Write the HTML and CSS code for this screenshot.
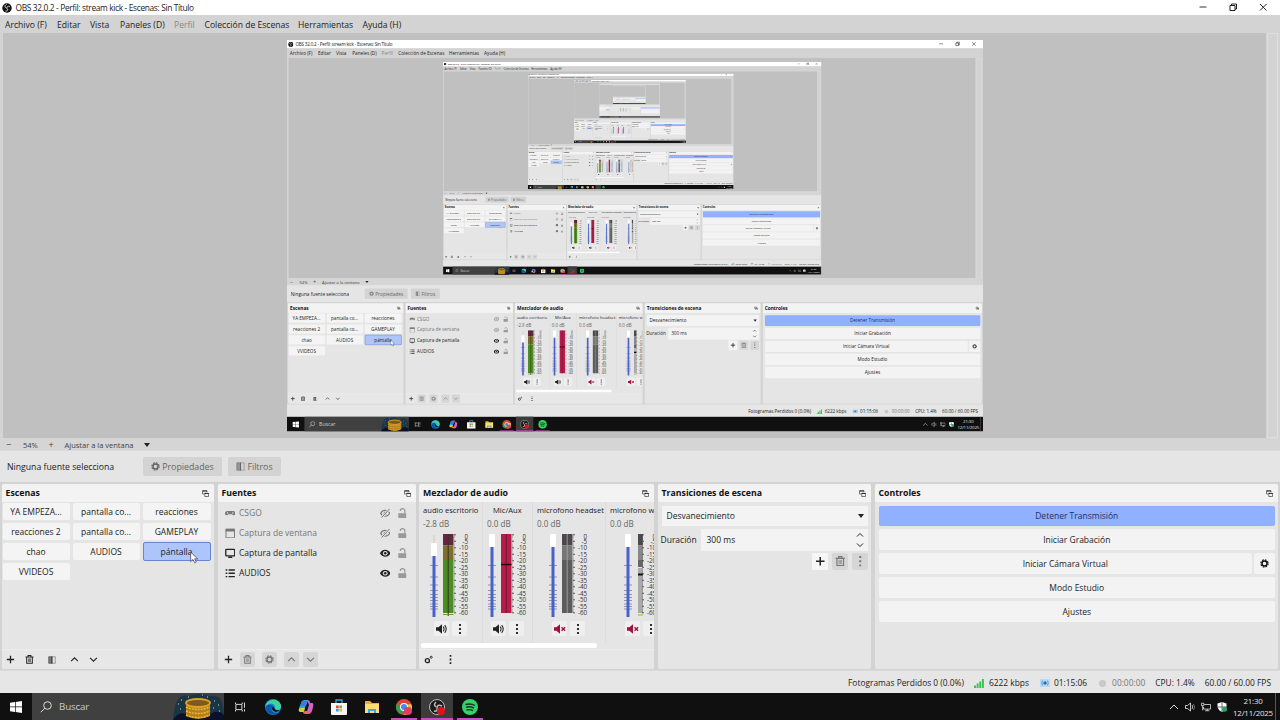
FILE: index.html
```html
<!DOCTYPE html>
<html lang="es">
<head>
    <meta charset="UTF-8">
    <meta name="viewport" content="width=device-width, initial-scale=1.0">
    <title>OBS 32.0.2 - Perfil: stream kick - Escenas: Sin Título</title>
    <link rel="stylesheet" href="styles.css">
</head>
<body>
    <svg class="sprite" width="0" height="0">
        <symbol id="obs" viewBox="0 0 20 20">
            <circle cx="10" cy="10" r="9.5" fill="#111"/>
            <path d="M9 3c-4 2-4 6 0 7M16 8c-3-3-7-1-6 3M7 16c4 1 6-3 3-5" fill="none" stroke="#ddd" stroke-width="2"/>
        </symbol>
        <symbol id="popout" viewBox="0 0 14 14">
            <path d="M4 8H1V1.500h9V4M5.500 6.500H13V13H5.500z" fill="none" stroke="#444" stroke-width="1.400"/>
            <path d="M1 2h9M5 7h8.500" stroke="#333" stroke-width="2.200"/>
        </symbol>
        <symbol id="plus" viewBox="0 0 16 16"><path d="M8 1.5v13M1.5 8h13" stroke="currentColor" stroke-width="2.3"/></symbol>
        <symbol id="trash" viewBox="0 0 16 16">
            <path d="M1 3.5h14M5.5 3V1h5v2M3 4v10.5h10V4" fill="none" stroke="currentColor" stroke-width="1.8"/>
            <path d="M6.2 6v6.500M8 6v6.500M9.800 6v6.500" stroke="currentColor" stroke-width="1"/>
        </symbol>
        <symbol id="filter" viewBox="0 0 16 16">
            <path d="M1.500 1.500h13v13h-13z" fill="none" stroke="currentColor" stroke-opacity=".5" stroke-width="1.500"/>
            <path d="M1 1h7v14H1z" fill="currentColor" fill-opacity=".55"/><path d="M7 1h2v14H7z" fill="currentColor"/>
        </symbol>
        <symbol id="up" viewBox="0 0 16 16"><path d="M2 11l6-6 6 6" fill="none" stroke="currentColor" stroke-width="2"/></symbol>
        <symbol id="down" viewBox="0 0 16 16"><path d="M2 5l6 6 6-6" fill="none" stroke="currentColor" stroke-width="2"/></symbol>
        <symbol id="gear" viewBox="0 0 16 16">
            <circle cx="8" cy="8" r="4.500" fill="none" stroke="currentColor" stroke-width="2.600"/>
            <circle cx="8" cy="8" r="6.500" fill="none" stroke="currentColor" stroke-width="2" stroke-dasharray="3 2.100"/>
        </symbol>
        <symbol id="gears" viewBox="0 0 16 16">
            <circle cx="6" cy="10" r="3.600" fill="none" stroke="currentColor" stroke-width="2.400"/>
            <circle cx="12.800" cy="4" r="1.800" fill="none" stroke="currentColor" stroke-width="1.600"/>
        </symbol>
        <symbol id="dots" viewBox="0 0 16 16"><path d="M6.500 0h3v3.200h-3zM6.500 6.400h3v3.200h-3zM6.500 12.800h3V16h-3z" fill="currentColor"/></symbol>
        <symbol id="gamepad" viewBox="0 0 16 16">
            <path d="M4 4.500h8c3 0 4 2 4 4s-2 3.500-4 2.200L10.500 9.500h-5L4 10.700C2 12 0 10.500 0 8.500s1-4 4-4z" fill="currentColor"/>
            <circle cx="4" cy="7.500" r="1.200" fill="#e5e5e5"/><circle cx="12" cy="7.500" r="1.200" fill="#e5e5e5"/>
        </symbol>
        <symbol id="window" viewBox="0 0 16 16"><path d="M1.500 2h13v13h-13z" fill="none" stroke="currentColor" stroke-width="1.500"/><path d="M1 1h14v4.500H1z" fill="currentColor"/></symbol>
        <symbol id="monitor" viewBox="0 0 16 16"><rect x="1.200" y="2.200" width="13.600" height="9.800" rx="1" fill="none" stroke="currentColor" stroke-width="2"/><path d="M5 14h6" stroke="currentColor" stroke-width="2.200"/></symbol>
        <symbol id="list" viewBox="0 0 16 16"><path d="M1 3h2.500M1 8h2.500M1 13h2.500M5.500 3H15M5.500 8H15M5.500 13H15" stroke="currentColor" stroke-width="2"/></symbol>
        <symbol id="eye" viewBox="0 0 16 16"><path d="M0 8c3-7 13-7 16 0-3 7-13 7-16 0z" fill="currentColor"/><circle cx="8" cy="8" r="3.600" fill="#e9e9e9"/><circle cx="8" cy="8" r="1.900" fill="currentColor"/></symbol>
        <symbol id="eye-off" viewBox="0 0 16 16"><path d="M1 8c3-6 11-6 14 0-3 6-11 6-14 0z" fill="none" stroke="currentColor" stroke-width="1.700"/><circle cx="8" cy="8" r="2.500" fill="currentColor"/><path d="M2 15L15 1" stroke="#e5e5e5" stroke-width="3.500"/><path d="M2.500 14.500L14.500 1.500" stroke="currentColor" stroke-width="1.500"/></symbol>
        <symbol id="lock" viewBox="0 0 16 16"><path d="M2 8h12v8H2z" fill="currentColor"/><path d="M5 4.500C5 0 12 0 12 4.500V8" fill="none" stroke="currentColor" stroke-width="1.900"/></symbol>
        <symbol id="speaker" viewBox="0 0 20 16"><path d="M0 5h4l6-5v16l-6-5H0z" fill="currentColor"/><path d="M12 4q3 4 0 8M14.500 1.500q5 6.500 0 13" fill="none" stroke="currentColor" stroke-width="1.700"/></symbol>
        <symbol id="muted" viewBox="0 0 20 16"><path d="M0 5h4l6-5v16l-6-5H0z" fill="#a01040"/><path d="M12.500 5l6 6M18.500 5l-6 6" stroke="#a01040" stroke-width="2.200"/></symbol>
        <!-- fader: handle is drawn per channel -->
        <symbol id="fader" viewBox="0 0 12 84">
            <path d="M2 31.500h8M2 43h8M2 51h8M2 56.500h8M2 60.500h8M2 63.500h8M2 66.500h8M2 70h8M2 72.500h8M2 75h8" stroke="#7480b0" stroke-width=".8"/>
        </symbol>
        <!-- dB scale next to the meters -->
        <symbol id="scale" viewBox="0 0 20 84">
            <path d="M0 .8h2M0 7.300h2M0 13.800h2M0 20.300h2M0 26.800h2M0 33.300h2M0 39.800h2M0 46.300h2M0 52.800h2M0 59.300h2M0 65.800h2M0 72.300h2M0 78.800h2" stroke="#333" stroke-width=".8"/>
            <path d="M.5 .8v78" stroke="#777" stroke-width=".8" stroke-dasharray=".5 .8"/>
            <g class="scale-text">
                <text x="14" y="5">0</text><text x="14" y="9.600">-5</text><text x="14" y="16">-10</text><text x="14" y="22.600">-15</text><text x="14" y="29">-20</text><text x="14" y="35.500">-25</text><text x="14" y="42">-30</text><text x="14" y="48.500">-35</text><text x="14" y="55">-40</text><text x="14" y="61.500">-45</text><text x="14" y="68">-50</text><text x="14" y="74.500">-55</text><text x="14" y="81">-60</text>
            </g>
        </symbol>
    </svg>

    <div class="desktop">
        <div class="titlebar">
            <svg class="logo"><use href="#obs"/></svg>
            <span class="title">OBS 32.0.2 - Perfil: stream kick - Escenas: Sin Título</span>
            <div class="window-buttons">
                <svg viewBox="0 0 10 10"><path d="M1.500 5h7" stroke="#333"/></svg>
                <svg viewBox="0 0 10 10"><path d="M2 3.500h5v5H2zM3.500 3.500V2h5v5H7" fill="none" stroke="#222"/></svg>
                <svg viewBox="0 0 10 10"><path d="M2 2l6.500 6.500M8.500 2L2 8.500" stroke="#222"/></svg>
            </div>
        </div>
        <div class="menubar">
            <span style="width: 52px">Archivo (F)</span><span style="width: 33px">Editar</span><span style="width: 30px">Vista</span><span style="width: 54px">Paneles (D)</span><span class="disabled" style="width: 30.5px">Perfil</span><span style="width: 93.5px">Colección de Escenas</span><span style="width: 64.5px">Herramientas</span><span>Ayuda (H)</span>
        </div>
        <div class="preview">
            <div class="canvas"><div class="capture"></div></div>
            <div class="vscroll"></div>
        </div>
        <div class="zoombar">
            <span class="zoom-out">−</span><span class="zoom-value">54%</span><span class="zoom-in">+</span><span class="zoom-mode">Ajustar a la ventana</span><i class="caret"></i>
        </div>
        <div class="contextbar">
            <span class="no-source">Ninguna fuente seleccionada</span>
            <span class="context-button properties"><svg><use href="#gear"/></svg>Propiedades</span>
            <span class="context-button filters"><svg><use href="#filter"/></svg>Filtros</span>
        </div>

        <div class="docks">
            <section class="dock">
                <h2>Escenas<svg><use href="#popout"/></svg></h2>
                <div class="scenes">
                    <span>YA EMPEZA...</span><span>pantalla co...</span><span>reacciones</span>
                    <span>reacciones 2</span><span>pantalla co...</span><span>GAMEPLAY</span>
                    <span>chao</span><span>AUDIOS</span><span class="selected">pántalla<svg class="cursor" viewBox="0 0 12 18"><path d="M1 1v14l3.500-3 2.500 5 2.500-1.200L7 11h4.500z" fill="#fff" stroke="#333"/></svg></span>
                    <span>VVIDEOS</span>
                </div>
                <div class="toolbar scene-tools">
                    <svg><use href="#plus"/></svg><svg><use href="#trash"/></svg><svg><use href="#filter"/></svg><svg><use href="#up"/></svg><svg><use href="#down"/></svg>
                </div>
            </section>

            <section class="dock">
                <h2>Fuentes<svg><use href="#popout"/></svg></h2>
                <div class="sources">
                    <div class="source hidden"><svg><use href="#gamepad"/></svg><span>CSGO</span><svg class="eye"><use href="#eye-off"/></svg><svg class="lock"><use href="#lock"/></svg></div>
                    <div class="source hidden"><svg><use href="#window"/></svg><span>Captura de ventana</span><svg class="eye"><use href="#eye-off"/></svg><svg class="lock"><use href="#lock"/></svg></div>
                    <div class="source"><svg><use href="#monitor"/></svg><span>Captura de pantalla</span><svg class="eye"><use href="#eye"/></svg><svg class="lock"><use href="#lock"/></svg></div>
                    <div class="source"><svg><use href="#list"/></svg><span>AUDIOS</span><svg class="eye"><use href="#eye"/></svg><svg class="lock"><use href="#lock"/></svg></div>
                </div>
                <div class="toolbar source-tools">
                    <b><svg><use href="#plus"/></svg></b><b class="off"><svg><use href="#trash"/></svg></b><b class="off"><svg><use href="#gear"/></svg></b><b class="off"><svg><use href="#up"/></svg></b><b class="off"><svg><use href="#down"/></svg></b>
                </div>
            </section>

            <section class="dock">
                <h2>Mezclador de audio<svg><use href="#popout"/></svg></h2>
                <div class="mixer">
                    <div class="channel desk">
                        <span class="name">audio escritorio</span><span class="level">-2.8 dB</span>
                        <div class="meters">
                            <svg class="fader" viewBox="0 0 12 84"><path d="M6 1v12" stroke="#ccc"/><use href="#fader" width="12" height="84"/><path d="M6 22v61" stroke="#4a62c8" stroke-width="3"/><rect x="3" y="9" width="6" height="13" rx="1" fill="#fff"/></svg>
                            <svg class="bars" viewBox="0 0 11 84"><path d="M0 0h10.500v11.500H0z" fill="#682443"/><path d="M0 11.500h10.500V26H0z" fill="#806e2b"/><path d="M0 26h10.500v53H0z" fill="#4b8e22"/><path d="M0 80.500h4.500M6 80.500h4.500" stroke="#56a82a"/><path d="M5.200 0v82" stroke="#33331f" stroke-width="1"/></svg>
                            <svg class="scale"><use href="#scale"/></svg>
                        </div>
                        <div class="channel-tools"><b><svg><use href="#speaker"/></svg></b><b><svg><use href="#dots"/></svg></b></div>
                    </div>
                    <div class="channel mic">
                        <span class="name">Mic/Aux</span><span class="level">0.0 dB</span>
                        <div class="meters">
                            <svg class="fader" viewBox="0 0 12 84"><use href="#fader" width="12" height="84"/><path d="M6 13v70" stroke="#4a62c8" stroke-width="3"/><rect x="3" y="0" width="6" height="13" rx="1" fill="#fff"/></svg>
                            <svg class="bars" viewBox="0 0 11 84"><path d="M0 0h10.500v79H0z" fill="#b81c4d"/><path d="M5.200 0v79" stroke="#6b1631" stroke-width="1"/><path d="M0 30.500h10.500" stroke="#300" stroke-width="1.500"/></svg>
                            <svg class="scale"><use href="#scale"/></svg>
                        </div>
                        <div class="channel-tools"><b><svg><use href="#speaker"/></svg></b><b><svg><use href="#dots"/></svg></b></div>
                    </div>
                    <div class="channel headset">
                        <span class="name">microfono headset</span><span class="level">0.0 dB</span>
                        <div class="meters">
                            <svg class="fader" viewBox="0 0 12 84"><use href="#fader" width="12" height="84"/><path d="M6 13v70" stroke="#4a62c8" stroke-width="3"/><rect x="3" y="0" width="6" height="13" rx="1" fill="#fff"/></svg>
                            <svg class="bars" viewBox="0 0 11 84"><path d="M0 0h10.500v11.500H0z" fill="#4d484b"/><path d="M0 11.500h10.500V26H0z" fill="#777"/><path d="M0 26h10.500v53H0z" fill="#5c5c5c"/><path d="M5.200 0v79" stroke="#aaa" stroke-width=".8"/></svg>
                            <svg class="scale"><use href="#scale"/></svg>
                        </div>
                        <div class="channel-tools"><b><svg><use href="#muted"/></svg></b><b><svg><use href="#dots"/></svg></b></div>
                    </div>
                    <div class="channel webcam">
                        <span class="name">microfono webcam</span><span class="level">0.0 dB</span>
                        <div class="meters">
                            <svg class="fader" viewBox="0 0 12 84"><use href="#fader" width="12" height="84"/><path d="M6 13v70" stroke="#4a62c8" stroke-width="3"/><rect x="3" y="0" width="6" height="13" rx="1" fill="#fff"/></svg>
                            <svg class="bars" viewBox="0 0 5 84"><path d="M0 0h5v11.500H0z" fill="#4d484b"/><path d="M0 11.500h5V26H0z" fill="#888"/><path d="M0 26h5v7H0z" fill="#666"/><path d="M0 34h5v45H0z" fill="#aaa"/><path d="M0 40.500h5" stroke="#111" stroke-width="2"/><path d="M0 81h5" stroke="#b9c832" stroke-width="1.500"/></svg>
                            <svg class="scale"><use href="#scale"/></svg>
                        </div>
                        <div class="channel-tools"><b><svg><use href="#muted"/></svg></b><b><svg><use href="#dots"/></svg></b></div>
                    </div>
                </div>
                <div class="hscroll"></div>
                <div class="toolbar mixer-tools"><svg><use href="#gears"/></svg><svg><use href="#dots"/></svg></div>
            </section>

            <section class="dock">
                <h2>Transiciones de escena<svg><use href="#popout"/></svg></h2>
                <div class="transitions">
                    <div class="select">Desvanecimiento<i class="caret"></i></div>
                    <div class="duration"><span>Duración</span><div class="spin">300 ms<div class="arrows"><svg><use href="#up"/></svg><svg><use href="#down"/></svg></div></div></div>
                    <div class="transition-tools"><b><svg><use href="#plus"/></svg></b><b class="off"><svg><use href="#trash"/></svg></b><b class="off"><svg><use href="#dots"/></svg></b></div>
                </div>
            </section>

            <section class="dock">
                <h2>Controles<svg><use href="#popout"/></svg></h2>
                <div class="controls">
                    <div class="control active">Detener Transmisión</div>
                    <div class="control">Iniciar Grabación</div>
                    <div class="control-row"><div class="control">Iniciar Cámara Virtual</div><div class="control config"><svg><use href="#gear"/></svg></div></div>
                    <div class="control">Modo Estudio</div>
                    <div class="control">Ajustes</div>
                </div>
            </section>
        </div>

        <div class="statusbar">
            <span class="dropped">Fotogramas Perdidos 0 (0.0%)</span>
            <svg class="signal" viewBox="0 0 10 9"><path d="M1 9V6.500M3.600 9V4.500M6.200 9V2.500M8.900 9V0" stroke="#35c24a" stroke-width="1.900"/></svg>
            <span class="bitrate">6222 kbps</span>
            <svg class="live" viewBox="0 0 10 8"><path d="M0 0h10v8H0z" fill="#b9daf3"/><circle cx="5" cy="4" r="1.700" fill="#256fb5"/><path d="M2.500 1.500q-1.500 2.500 0 5M7.500 1.500q1.500 2.500 0 5" fill="none" stroke="#5b9cd3"/></svg>
            <span class="stream-time">01:15:06</span>
            <svg class="rec" viewBox="0 0 10 10"><circle cx="5" cy="5" r="4" fill="#c9c9c9"/></svg>
            <span class="rec-time">00:00:00</span>
            <span class="cpu">CPU: 1.4%</span>
            <span>60.00 / 60.00 FPS</span>
        </div>

        <div class="taskbar">
            <div class="start"><svg viewBox="0 0 12 12"><path d="M0 1.700L5 1v4.600H0zM5.700.9L12 0v5.600H5.700zM0 6.300h5V11l-5-.7zM5.700 6.300H12V12l-6.300-.9z" fill="#fff"/></svg></div>
            <div class="search">
                <svg class="lens" viewBox="0 0 12 12"><circle cx="7.500" cy="4.500" r="3.800" fill="none" stroke="#ddd"/><path d="M4.800 7.200L.8 11.200" stroke="#ddd"/></svg>
                <span>Buscar</span>
                <svg class="highlight" viewBox="0 0 51 26">
                    <path d="M0 26Q1 10 6 4q4-4 10-2 10-4 20 0 9-1 12 4 3 6 3 20z" fill="#1c3544"/>
                    <path d="M0 26q5-9 13-6l22 2q9-8 16-1v5z" fill="#0b1128"/>
                    <path d="M13 8v14q12 6 24 0V8z" fill="#b97f16"/>
                    <ellipse cx="25" cy="9" rx="12" ry="4" fill="#7d5a18" stroke="#dba22c" stroke-width="1.800"/>
                    <path d="M13 13q12 5 24 0M13 17q12 5 24 0M13 21q12 5 24 0" fill="none" stroke="#e8bd48" stroke-width="1.400" stroke-dasharray="2 1"/>
                    <path d="M5 10h1M8 6h1M15 3h1M34 3h1M41 7h1M45 11h1M46 17h1M7 15h1M40 14h1M29 1h1" stroke="#b8dce8"/>
                </svg>
            </div>
            <div class="app"><svg viewBox="0 0 16 16"><path d="M2.500 4.500h8v7h-8zM2 2v2M11 2v2M2 12v2M11 12v2M14 2v7M14 11v3" fill="none" stroke="#ddd" stroke-width="1.300"/></svg></div>
            <div class="app"><svg viewBox="0 0 16 16"><circle cx="8" cy="8" r="8" fill="#1689d4"/><path d="M0 8C1 1 12-3 16 6q1 5-4 5-3 0-2-3C9 3 3 4 0 8z" fill="#42cfa2"/><path d="M1 7q4-3 7 0-4 5 2 7 3 0 4-1Q9 18 3 14 0 11 1 7z" fill="#0d57a8"/><path d="M8 7q-3 4 3 6 3-1 4-2-4 1-5-1z" fill="#111"/></svg></div>
            <div class="app"><svg viewBox="0 0 16 16"><path d="M4 2q1-1 3-1h3L6 11q-1 2-3 2-3 0-2-4z" fill="#28a8e0"/><path d="M9 1q3 0 3 3h2q2 0 1 4l-1 4q-1 3-3 3H8l3-9z" fill="#d264c9"/><path d="M4 2h6L8 7H2z" fill="#4377df"/><path d="M3 9h4l-1 4H3q-3 0-2-3z" fill="#e9c545"/><path d="M7 12h6q-1 3-3 3H7q-2 0-2-2z" fill="#ed675c"/></svg></div>
            <div class="app"><svg viewBox="0 0 16 16"><path d="M5 4V1h6v3" fill="none" stroke="#3da7e0" stroke-width="1.300"/><path d="M0 4h16v11q0 1-1 1H1q-1 0-1-1z" fill="#f4f4f4"/><path d="M5 6.500h2.700v2.700H5z" fill="#e74b2d"/><path d="M8.300 6.500H11v2.700H8.300z" fill="#75b52b"/><path d="M5 9.800h2.700v2.700H5z" fill="#31a2da"/><path d="M8.300 9.800H11v2.700H8.300z" fill="#efb52c"/></svg></div>
            <div class="app"><svg viewBox="0 0 16 16"><path d="M1 2h5l2 2h7v10H1z" fill="#e8ad32"/><path d="M1 5h14v9H1z" fill="#fcdc78"/><path d="M4 10h8v4H4z" fill="#4ba3dc"/><path d="M6 12h4v2H6z" fill="#fcdc78"/></svg></div>
            <div class="app running"><svg viewBox="0 0 16 16"><circle cx="8" cy="8" r="8" fill="#dc4637"/><path d="M1 4q-3 7 3 11l5-3-5-4z" fill="#359e55"/><path d="M15 5l-6 1 2 5-3 5q9-1 8-9z" fill="#edbd35"/><circle cx="8" cy="8" r="4" fill="#fff"/><circle cx="8" cy="8" r="3" fill="#4687e8"/><circle cx="12" cy="12" r="4" fill="#df3c68"/></svg></div>
            <div class="app running focused"><svg viewBox="0 0 16 16"><circle cx="8" cy="8" r="7.500" fill="#1b1b1b" stroke="#bbb"/><path d="M7 3q-3 3 0 5M13 7q-4-2-5 1M5 12q4 1 3-4" fill="none" stroke="#bbb" stroke-width="1.500"/><circle cx="12" cy="12" r="4" fill="#e3101e"/></svg></div>
            <div class="app running"><svg viewBox="0 0 16 16"><circle cx="8" cy="8" r="8" fill="#34d267"/><path d="M3.500 5.500q5-1.500 9.500 1M4 8.300q4.300-1.300 8 .8M4.500 11q3.500-1 6.500.7" fill="none" stroke="#12351e" stroke-width="1.400"/></svg></div>
            <div class="tray">
                <svg viewBox="0 0 10 10"><path d="M1 7l4-4 4 4" fill="none" stroke="#ddd"/></svg>
                <svg viewBox="0 0 10 10"><path d="M.5 3.500h2L5.500 1v8l-3-2.500h-2z" fill="none" stroke="#ddd" stroke-width=".9"/><path d="M7 3q1.500 2 0 4" fill="none" stroke="#ddd" stroke-width=".8"/><path d="M8.500 2q2 3 0 6" fill="none" stroke="#888" stroke-width=".8"/></svg>
                <svg viewBox="0 0 12 10"><path d="M4 2h7.500v5.500H3V5M5 9.500h5M7.500 7.500v2M.5.500h3v3h-3zM2 3.500V9" fill="none" stroke="#ddd"/></svg>
                <svg viewBox="0 0 10 10"><path d="M5 0l4.500 1.500v3Q9 8 5 10 1 8 .5 4.500v-3z" fill="#fff"/><path d="M5 0v10M.5 5h9" stroke="#333" stroke-width=".7"/><circle cx="7.500" cy="7.200" r="2.500" fill="#24a567"/></svg>
            </div>
            <div class="clock"><span>21:30</span><span>12/11/2025</span></div>
            <div class="show-desktop"></div>
        </div>
    </div>
    <script src="script.js"></script>
</body>
</html>
```

FILE: styles.css
```css
body {
    margin: 0;
    overflow: hidden;
    font-family: "Open Sans", "Noto Sans", sans-serif;
    font-size: 8.5px;
    line-height: 12px;
    color: #222;
}
.sprite {
    position: absolute;
}
.desktop {
    width: 1280px;
    height: 720px;
    display: flex;
    flex-direction: column;
    overflow: hidden;
    background: #d3d3d3;
    white-space: nowrap;
}
svg {
    display: block;
    flex: none;
    width: 9px;
    height: 9px;
}
b {
    display: flex;
    align-items: center;
    justify-content: center;
    flex: none;
}
.scale-text {
    font-size: 6.2px;
    text-anchor: end;
    fill: #333;
}

/* title and menu */
.titlebar {
    height: 15px;
    flex: none;
    display: flex;
    align-items: center;
    background: #fff;
}
.logo {
    width: 10px;
    height: 10px;
    margin: 0 3.5px 0 2px;
}
.title {
    font-size: 8.4px;
    letter-spacing: -0.35px;
}
.window-buttons {
    display: flex;
    gap: 20px;
    margin: -1px 12px 0 auto;
}
.window-buttons svg {
    width: 10px;
    height: 10px;
}
.menubar {
    height: 18px;
    flex: none;
    display: flex;
    align-items: center;
    padding: 1px 0 0 5px;
    box-sizing: border-box;
    font-size: 8.6px;
}
.disabled {
    color: #888;
}

/* preview */
.preview {
    height: 405px;
    flex: none;
    display: flex;
    padding-left: 3px;
}
.canvas {
    width: 1263px;
    display: flex;
    justify-content: center;
    padding-top: 7px;
    box-sizing: border-box;
    background: #c0c0c0;
}
.capture {
    width: 696px;
    height: 391.5px;
    overflow: hidden;
    background: #c0c0c0;
}
.capture .desktop {
    transform: scale(0.54375);
    transform-origin: 0 0;
}
.vscroll {
    width: 9px;
    margin-left: 1px;
    border: 1px solid #dedede;
    background: #d3d3d3;
}
.zoombar {
    height: 13px;
    flex: none;
    display: flex;
    align-items: center;
    padding: 1px 0 0 6px;
    font-size: 7.5px;
    color: #444;
    background: #d5d5d5;
    border-bottom: 1px solid #dcdcdc;
    box-sizing: border-box;
}
.zoom-out {
    width: 17px;
    font-size: 9px;
}
.zoom-value {
    width: 25.5px;
}
.zoom-in {
    width: 16px;
    font-size: 9px;
}
.zoom-mode {
    width: 79px;
}
.caret {
    border: 3.5px solid transparent;
    border-top: 4px solid #222;
    border-bottom: 0;
}
.contextbar {
    height: 31px;
    flex: none;
    display: flex;
    align-items: center;
    padding-left: 7px;
    background: #e5e5e5;
}
.no-source {
    width: 106.5px;
    overflow: hidden;
    margin-right: 29.5px;
    font-size: 8.7px;
}
.context-button {
    height: 19px;
    display: flex;
    align-items: center;
    justify-content: center;
    gap: 2px;
    margin-right: 6px;
    border-radius: 2px;
    background: #d3d3d3;
    font-size: 8.8px;
    color: #666;
}
.properties {
    width: 79px;
}
.filters {
    width: 53px;
}

/* docks */
.docks {
    height: 188px;
    flex: none;
    display: grid;
    grid-template-columns: 212.5px 198px 235px 213.5px 403.5px;
    gap: 3.5px;
    padding: 2px 1px 1px 1.5px;
    box-sizing: border-box;
}
.dock {
    display: flex;
    flex-direction: column;
    min-width: 0;
    overflow: hidden;
    border-radius: 2px;
    background: #e5e5e5;
}
.dock h2 {
    height: 18px;
    flex: none;
    display: flex;
    align-items: center;
    justify-content: space-between;
    margin: 0;
    padding: 0 5px 0 4px;
    font-size: 8.75px;
    font-weight: bold;
    color: #111;
    background: #f3f3f3;
}
.dock h2 svg {
    width: 7px;
    height: 7px;
}
.toolbar {
    height: 20px;
    flex: none;
    display: flex;
    align-items: center;
    margin-top: auto;
    box-sizing: border-box;
    border-top: 1px solid #ededed;
    background: #e7e7e7;
}
.scenes {
    display: grid;
    grid-template-columns: 67px 67px 68px;
    grid-auto-rows: 17px;
    gap: 3px;
    padding: 1px 1px 0 1px;
}
.scenes span {
    display: flex;
    align-items: center;
    justify-content: center;
    border-radius: 2px;
    background: #f4f4f4;
}
.scenes .selected {
    position: relative;
    border: 1px solid #6786cf;
    background: #adc5fa;
    margin: -1px 0;
}
.cursor {
    position: absolute;
    left: 46px;
    top: 8px;
    width: 8px;
    height: 13px;
}
.scene-tools {
    gap: 11px;
    padding-left: 4.5px;
}
.scene-tools svg:nth-child(1) {
    margin-right: -1px;
}
.scene-tools svg:nth-child(3) {
    width: 8px;
    height: 8px;
    margin-left: 3px;
    margin-right: 3px;
}
.scene-tools svg:nth-child(5) {
    margin-left: -1px;
}
.source {
    height: 20px;
    display: flex;
    align-items: center;
    gap: 4px;
    padding: 0 8px 0 7px;
}
.source > svg {
    width: 10.5px;
    height: 10.5px;
}
.source span {
    flex: 1;
}
.source.hidden {
    color: #777;
}
.source .lock {
    margin-left: 3px;
    color: #999;
}
.sources {
    padding-top: 1px;
}
.source-tools {
    padding-left: 3px;
}
.source-tools b {
    width: 15px;
    height: 15px;
    margin-right: 7px;
}
.source-tools b:nth-child(1) {
    margin-right: 4px;
}
.source-tools b:nth-child(4) {
    margin-right: 4px;
}
.off {
    color: #777;
    border-radius: 2px;
    background: #d6d6d6;
}

/* mixer */
.mixer {
    height: 141px;
    display: flex;
    overflow: hidden;
    font-size: 8.1px;
}
.channel {
    flex: none;
    display: flex;
    flex-direction: column;
    box-sizing: border-box;
    padding-top: 2px;
    padding-left: 4px;
    border-right: 1px solid #dcdcdc;
    overflow: hidden;
}
.desk {
    width: 64px;
}
.mic {
    width: 50px;
}
.headset {
    width: 73px;
}
.webcam {
    width: 73px;
}
.name {
    font-size: 7.6px;
}
.mic .name {
    padding-left: 6px;
}
.level {
    margin-top: 2px;
    color: #666;
}
.meters {
    height: 84px;
    display: flex;
    margin-top: 4px;
    padding-left: 5px;
}
.fader {
    width: 12px;
    height: 84px;
}
.bars {
    width: 11px;
    height: 84px;
    margin-left: 3px;
}
.scale {
    width: 20px;
    height: 84px;
    margin-left: -0.5px;
}
.mic .meters {
    padding-left: 0;
    margin-left: -1px;
}
.headset .meters {
    padding-left: 10px;
}
.webcam .meters {
    padding-left: 12px;
}
.webcam .bars {
    width: 5px;
    margin-left: 3.5px;
}
.channel-tools {
    display: flex;
    gap: 3px;
    margin-top: 3px;
    padding-left: 11px;
}
.channel-tools b {
    width: 15px;
    height: 15px;
    border-radius: 2px;
    background: #efefef;
}
.channel-tools svg {
    width: 12px;
    height: 10px;
}
.mic .channel-tools {
    padding-left: 4px;
}
.headset .channel-tools {
    padding-left: 15px;
}
.webcam .channel-tools {
    padding-left: 15px;
}
.hscroll {
    width: 176px;
    height: 4.5px;
    margin: 0 0 0 2px;
    border-radius: 2px;
    background: #fff;
}
.mixer-tools {
    padding-left: 5px;
    gap: 13px;
}

/* transitions */
.transitions {
    padding: 4px 3px 0 4px;
}
.select {
    height: 20px;
    display: flex;
    align-items: center;
    justify-content: space-between;
    padding: 0 4px 0 5px;
    background: #f3f3f3;
}
.duration {
    display: flex;
    align-items: center;
    margin: 3px 0 2px -1px;
}
.duration > span {
    width: 40px;
}
.spin {
    flex: 1;
    height: 22px;
    display: flex;
    align-items: center;
    justify-content: space-between;
    padding: 0 4px 0 6px;
    background: #f3f3f3;
}
.arrows svg {
    width: 8px;
    height: 8px;
}
.arrows svg + svg {
    margin-top: 2px;
}
.transition-tools {
    display: flex;
    justify-content: flex-end;
    gap: 4px;
}
.transition-tools b {
    width: 16px;
    height: 17px;
}
.transition-tools svg {
    width: 10.5px;
    height: 10.5px;
}
.transition-tools b:first-child {
    background: #f6f6f6;
}

/* controls */
.controls {
    display: flex;
    flex-direction: column;
    gap: 3px;
    padding: 4px 3px 0 4px;
}
.control {
    height: 21px;
    flex: auto;
    display: flex;
    align-items: center;
    justify-content: center;
    border-radius: 2px;
    background: #f3f3f3;
}
.controls .active {
    height: 20px;
    color: #1e2f66;
    background: #8fb1ff;
}
.control-row {
    display: flex;
    gap: 2px;
}
.config {
    flex: none;
    width: 21px;
    color: #111;
}

/* status bar */
.statusbar {
    height: 23px;
    flex: none;
    display: flex;
    align-items: center;
    justify-content: flex-end;
    padding: 2px 9px 0 0;
    border-top: 1px solid #dadada;
    box-sizing: border-box;
    background: #e6e6e6;
    font-size: 8.4px;
}
.signal {
    width: 10px;
    margin: 0 5px 0 10px;
}
.live {
    width: 10px;
    height: 8px;
    margin: 0 4px 0 11px;
}
.rec {
    margin: 0 5px 0 11px;
}
.rec-time {
    color: #777;
}
.cpu {
    margin: 0 10px;
}

/* taskbar */
.taskbar {
    height: 27px;
    flex: none;
    display: flex;
    color: #e5e5e5;
    background: #101010;
}
.start {
    width: 32px;
    display: flex;
    align-items: center;
    justify-content: center;
}
.start svg {
    width: 12px;
    height: 12px;
}
.search {
    width: 191.5px;
    display: flex;
    align-items: center;
    background: #404040;
    font-size: 9.8px;
    letter-spacing: -0.2px;
    color: #c9c9c9;
}
.lens {
    width: 12px;
    height: 12px;
    margin: 0 7px 0 8px;
}
.highlight {
    width: 51px;
    height: 26px;
    margin: 1px 0 0 auto;
}
.app {
    width: 32.9px;
    display: flex;
    align-items: center;
    justify-content: center;
    box-sizing: border-box;
}
.app svg {
    width: 16px;
    height: 16px;
}
.app:nth-child(3) svg {
    width: 12px;
    height: 12px;
}
.running {
    border-top: 2px solid transparent;
    border-bottom: 2px solid #c44fc4;
    width: 26px;
    margin: 0 3.4px;
}
.running.focused {
    width: 32px;
    margin: 0 0.4px;
    border-top-color: #3c3c3c;
    background: #3c3c3c;
}
.tray {
    display: flex;
    align-items: center;
    gap: 6px;
    margin-left: auto;
    margin-right: 6px;
}
.tray svg {
    width: 10px;
    height: 10px;
}
.clock {
    width: 40px;
    display: flex;
    flex-direction: column;
    align-items: center;
    justify-content: center;
    font-size: 7.9px;
    letter-spacing: -0.2px;
}
.show-desktop {
    width: 4px;
    margin-left: 2px;
    border-left: 1px solid #555;
}
```

FILE: script.js
```js
// the captured screen contains the program itself, so nest copies of it
const levels = 6;
const desktop = document.querySelector(".desktop");
const template = desktop.cloneNode(true);
let target = desktop.querySelector(".capture");

for (let i = 0; i < levels; i++) {
    const copy = template.cloneNode(true);
    copy.setAttribute("aria-hidden", "true");
    // the deepest copies are too small for any lettering
    if (i >= 4) {
        copy.querySelectorAll("span, .select, .control").forEach(el => {
            el.childNodes.forEach(node => {
                if (node.nodeType === Node.TEXT_NODE) node.textContent = "";
            });
        });
        copy.querySelectorAll(".scale").forEach(el => el.innerHTML = "");
    }
    target.appendChild(copy);
    target = copy.querySelector(".capture");
}
```
